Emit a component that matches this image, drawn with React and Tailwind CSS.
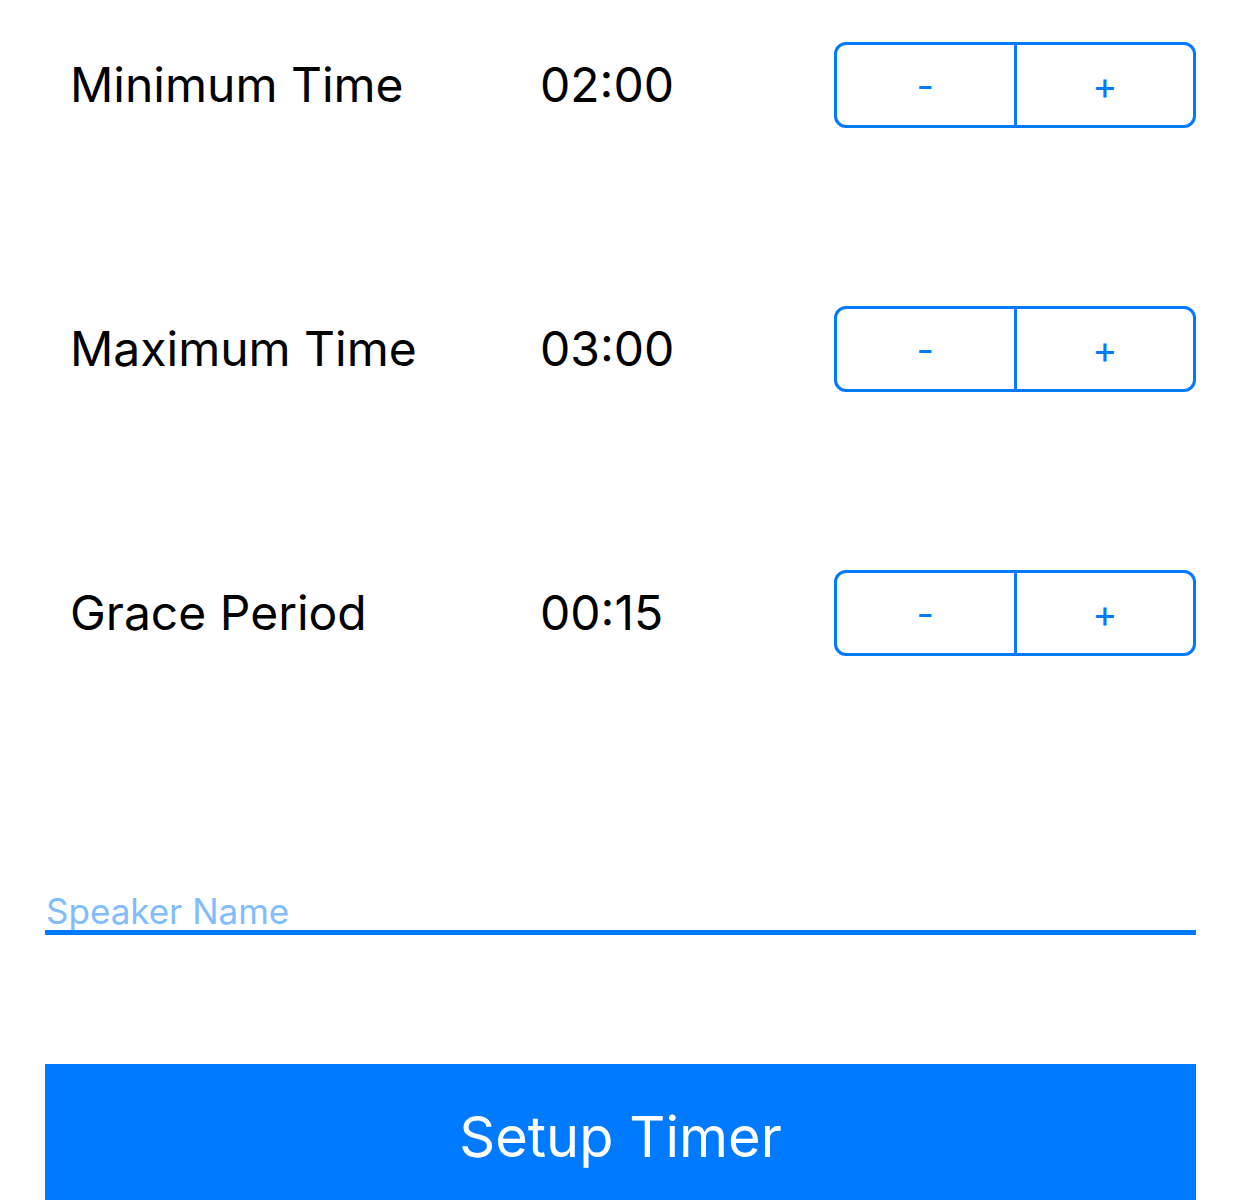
import { useState } from "react";

const rows = [
    { label: "Minimum Time", value: "02:00" },
    { label: "Maximum Time", value: "03:00" },
    { label: "Grace Period", value: "00:15" },
];

const Stepper = () => (
    <div className="flex h-[86px] w-[362px] shrink-0 rounded-[12px] border-[3px] border-[#007aff] text-[#007aff] overflow-hidden">
        <button className="flex-1 flex items-center justify-center text-[38px] leading-none">-</button>
        <div className="w-[3px] bg-[#007aff]" />
        <button className="flex-1 flex items-center justify-center text-[38px] leading-none">+</button>
    </div>
);

const App = () => {
    const [name, setName] = useState("");
    return (
        <div className="min-h-screen bg-white pl-[45px] pr-[46px] pt-[42px] font-['Inter','Noto_Sans',sans-serif]">
            <div className="flex flex-col gap-[178px]">
                {rows.map(r => (
                    <div key={r.label} className="flex items-center h-[86px] pl-[25px]">
                        <span className="w-[470px] text-[48px] text-black">{r.label}</span>
                        <span className="flex-1 text-[48px] text-black">{r.value}</span>
                        <Stepper />
                    </div>
                ))}
            </div>

            <div className="mt-[236px]">
                <input
                    value={name}
                    onChange={e => setName(e.target.value)}
                    placeholder="Speaker Name"
                    className="w-full h-[43px] pl-[1px] text-[35px] leading-none border-b-[5px] border-[#007aff] outline-none placeholder:text-[#80bdff] bg-transparent"
                />
            </div>

            <button className="mt-[129px] w-full h-[150px] bg-[#007aff] text-white text-[56px] flex items-start justify-center pt-[45px] leading-none">
                Setup Timer
            </button>
        </div>
    );
};

export default App;
